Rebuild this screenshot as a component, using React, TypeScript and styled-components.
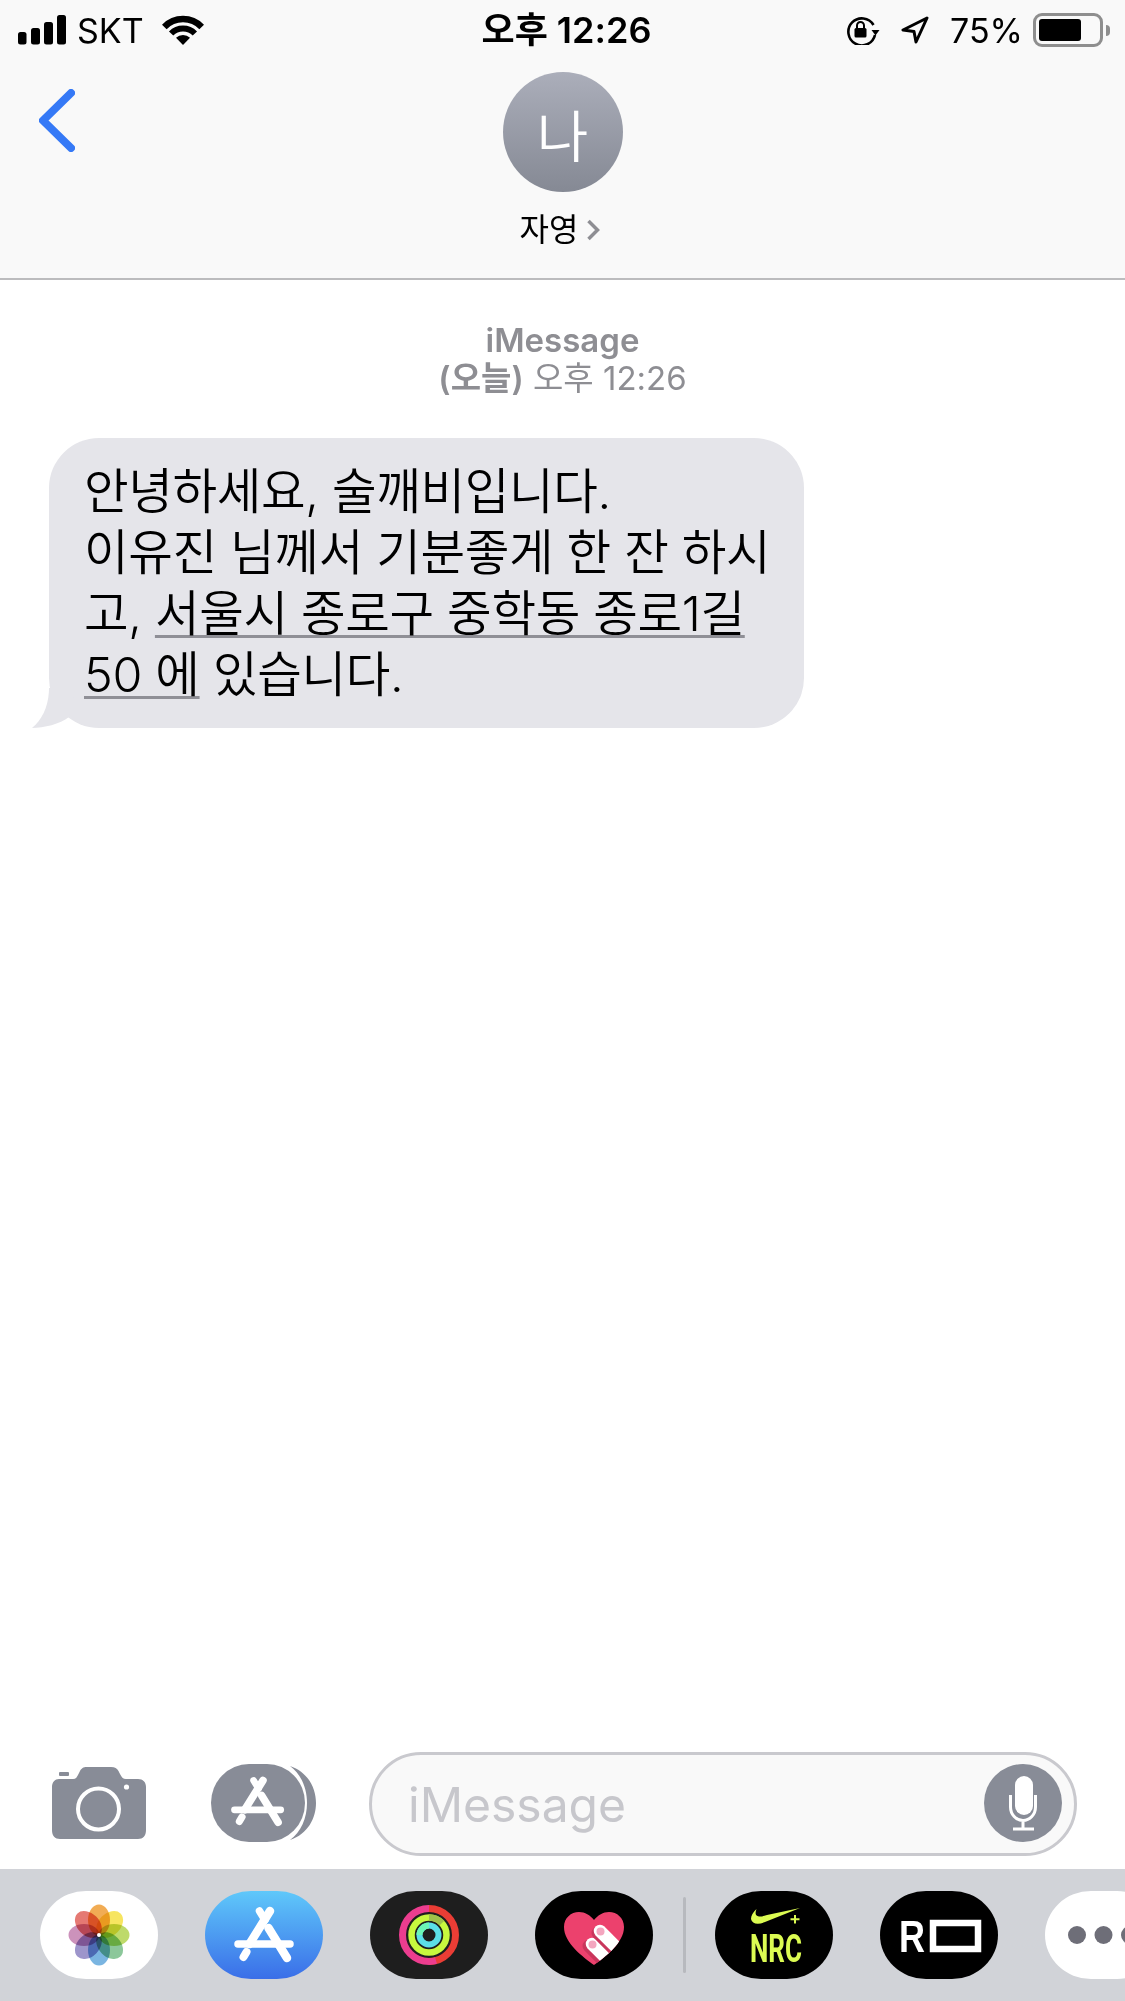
import React from "react";
import styled, { createGlobalStyle } from "styled-components";

const Global = createGlobalStyle`
  html, body { margin: 0; padding: 0; background: #fff; overflow: hidden; }
  body { font-family: Inter, "Noto Sans CJK KR", sans-serif; }
  * { box-sizing: border-box; }
`;

const Page = styled.div`
  width: 1125px;
  height: 2001px;
  display: flex;
  flex-direction: column;
  background: #fff;
  overflow: hidden;
`;

const Header = styled.header`
  height: 280px;
  flex-shrink: 0;
  background: #f9f9f9;
  border-bottom: 2px solid #bcbcbe;
  display: flex;
  flex-direction: column;
`;

const StatusBar = styled.div`
  height: 60px;
  display: grid;
  grid-template-columns: 1fr auto 1fr;
  align-items: center;
  padding: 0 15px 0 18px;
  color: #000;
`;

const StatusLeft = styled.div`
  display: flex;
  align-items: center;
`;

const Carrier = styled.span`
  font-size: 34px;
  font-weight: 400;
  margin: 2px 18px 0 11px;
  line-height: 40px;
`;

const Clock = styled.span`
  font-size: 36px;
  font-weight: 600;
  line-height: 40px;
  margin-left: 5px;
`;

const StatusRight = styled.div`
  display: flex;
  align-items: center;
  justify-content: flex-end;
`;

const LockIcon = styled.svg`
  margin-right: 20px;
`;

const Percent = styled.span`
  font-size: 34px;
  line-height: 40px;
  margin: 2px 10px 0 21px;
`;

const BatteryShell = styled.div`
  width: 70px;
  height: 34px;
  border: 3px solid #8e8e8e;
  border-radius: 9px;
  padding: 3px;
  display: flex;
`;

const BatteryFill = styled.div<{ $level: number }>`
  width: ${(p) => p.$level}%;
  background: #000;
  border-radius: 3px;
`;

const BatteryNub = styled.div`
  width: 4px;
  height: 11px;
  margin-left: 3px;
  background: #8e8e8e;
  border-radius: 0 4px 4px 0;
`;

const Nav = styled.div`
  display: grid;
  grid-template-columns: 1fr auto 1fr;
  padding-top: 12px;
`;

const BackSlot = styled.div`
  padding: 17px 0 0 39px;
`;

const Contact = styled.div`
  display: flex;
  flex-direction: column;
  align-items: center;
`;

const Avatar = styled.div`
  width: 120px;
  height: 120px;
  border-radius: 50%;
  background: linear-gradient(#abaeba, #858994);
  color: #fff;
  font-size: 56px;
  font-weight: 350;
  display: flex;
  align-items: center;
  justify-content: center;
`;

const NameRow = styled.div`
  display: flex;
  align-items: center;
  gap: 8px;
  margin: 16px 0 0 -5px;
  font-size: 32px;
  line-height: 44px;
  color: #000;
`;

const Conversation = styled.main`
  flex: 1;
  padding: 41px 0 0 49px;
`;

const Stamp = styled.div`
  margin-left: -49px;
  text-align: center;
  color: #8e8e93;
  font-size: 33px;
  line-height: 38px;
`;

const StampTitle = styled.div`
  font-weight: 600;
`;

const StampDay = styled.span`
  font-weight: 600;
`;

const Bubble = styled.div`
  position: relative;
  width: 755px;
  margin-top: 41px;
  padding: 23px 20px 23px 35px;
  background: #e5e5ea;
  border-radius: 50px;
  color: #000;
  font-size: 48.5px;
  letter-spacing: -0.35px;
  line-height: 61px;
  font-weight: 350;
  white-space: nowrap;
`;

const BubbleTail = styled.svg`
  position: absolute;
  left: -19px;
  bottom: 0;
`;

const AddressLink = styled.span`
  text-decoration: underline;
  text-decoration-color: #8f8f96;
  text-decoration-thickness: 3px;
  text-underline-offset: 4px;
  text-decoration-skip-ink: none;
`;

const InputRow = styled.div`
  height: 130px;
  flex-shrink: 0;
  display: flex;
  align-items: center;
  padding-left: 51px;
`;

const CameraIcon = styled.svg`
  margin-top: -2px;
  flex-shrink: 0;
`;

const AppsButton = styled.svg`
  margin: -2px 0 0 64px;
  flex-shrink: 0;
`;

const InputField = styled.div`
  margin-left: 52px;
  width: 708px;
  height: 104px;
  border: 3px solid #c9c9ce;
  border-radius: 52px;
  background: #f9f9f9;
  display: flex;
  align-items: center;
  justify-content: space-between;
  padding: 0 12px 0 36px;
`;

const Placeholder = styled.span`
  font-size: 48px;
  color: #c7c7cc;
  font-weight: 400;
`;

const MicIcon = styled.svg`
  margin-top: -3px;
`;

const Dock = styled.footer`
  height: 132px;
  flex-shrink: 0;
  background: #d1d3d8;
  display: flex;
  align-items: center;
  padding-left: 40px;
  overflow: hidden;
`;

const AppGroup = styled.div`
  display: flex;
  gap: 47px;
  flex-shrink: 0;
`;

const DockDivider = styled.div`
  width: 3px;
  height: 76px;
  margin: 0 29px 0 30px;
  background: #b7b9be;
  border-radius: 2px;
  flex-shrink: 0;
`;

const DockApp = styled.div<{ $bg: string }>`
  width: 118px;
  height: 88px;
  flex-shrink: 0;
  border-radius: 46px / 44px;
  background: ${(p) => p.$bg};
  display: flex;
`;

const AStore = () => (
  <g stroke="#fff" strokeWidth="7.5" strokeLinecap="round" fill="none">
    <path d="M65 20 L44.5 53" strokeWidth="8.5" />
    <path d="M54.5 20 L60 29" />
    <path d="M63.5 37 L82 67" strokeWidth="8.5" />
    <path d="M33 53 H85" />
    <path d="M38.5 66 L41.5 61" strokeWidth="8" />
  </g>
);

const AppIcon = ({ children }: { children: React.ReactNode }) => (
  <svg width="118" height="88" viewBox="0 0 118 88">
    {children}
  </svg>
);

const Signal = () => (
  <svg width="48" height="30" viewBox="0 0 48 30">
    <rect x="0" y="17" width="8.5" height="12.5" rx="2.5" />
    <rect x="13" y="13" width="9" height="16.5" rx="2.5" />
    <rect x="26" y="7" width="9" height="22.5" rx="2.5" />
    <rect x="39" y="0" width="9" height="29.5" rx="2.5" />
  </svg>
);

const arc = (r: number) => {
  const a = (46 * Math.PI) / 180;
  const dx = r * Math.sin(a);
  const dy = r * Math.cos(a);
  return `M${21 - dx} ${30 - dy} A${r} ${r} 0 0 1 ${21 + dx} ${30 - dy}`;
};

const Wifi = () => (
  <svg width="42" height="30" viewBox="0 0 42 30">
    <path d={arc(26)} fill="none" stroke="#000" strokeWidth="6.5" />
    <path d={arc(16.5)} fill="none" stroke="#000" strokeWidth="6" />
    <path d="M21 30 L14 22.8 A10 10 0 0 1 28 22.8 Z" />
  </svg>
);

const RotationLock = () => (
  <LockIcon width="36" height="30" viewBox="0 0 36 30">
    <path d="M30 20 A13.5 13.5 0 1 1 28.5 10" fill="none" stroke="#000" strokeWidth="2.6" />
    <path d="M26.5 15 H34.5 L30.5 20.5 Z" />
    <rect x="9.5" y="13" width="12" height="9.5" rx="1.5" />
    <path d="M12 13 V10.5 A3.5 3.5 0 0 1 19 10.5 V13" fill="none" stroke="#000" strokeWidth="2" />
  </LockIcon>
);

const LocationArrow = () => (
  <svg width="28" height="28" viewBox="0 0 28 28">
    <path d="M26 2 L2 14 L13 15.5 L15 26 Z" fill="none" stroke="#000" strokeWidth="3" strokeLinejoin="round" />
  </svg>
);

const Camera = () => (
  <CameraIcon width="96" height="72" viewBox="0.5 0 95 72">
    <path
      fill="#888c97"
      d="M8 12 H22 C25 12 26 10 27.5 7 L29 4 C30.5 1.5 32 0 36 0 H60 C64 0 66 1.5 67.5 4 L69 7 C70.5 10 72 12 75 12 H87 C92 12 95 15 95 20 V63 C95 69 92 72 87 72 H9 C4 72 1 69 1 63 V20 C1 15 4 12 8 12 Z"
    />
    <rect x="8" y="5" width="10" height="4" rx="1" fill="#888c97" />
    <circle cx="47.5" cy="42" r="20.5" fill="none" stroke="#fff" strokeWidth="4" />
    <circle cx="75.5" cy="20" r="2.6" fill="#fff" />
  </CameraIcon>
);

const Apps = () => (
  <AppsButton width="106" height="78" viewBox="0 0 106 78">
    <rect x="0" y="0" width="94" height="78" rx="38" ry="39" fill="#888c97" />
    <path
      fill="#888c97"
      d="M79 2 C97 8 105 24 105 39 C105 54 97 70 79 76 C90 68 96 54 96 39 C96 24 90 10 79 2 Z"
    />
    <g transform="translate(-5.9 -1.35) scale(0.89)">
      <AStore />
    </g>
  </AppsButton>
);

const Mic = () => (
  <MicIcon width="78" height="78" viewBox="0 0 78 78">
    <circle cx="39" cy="39" r="39" fill="#888c97" />
    <rect x="31" y="12" width="18" height="39" rx="9" fill="#fff" />
    <path
      d="M26.5 31 V43 A12.5 13.5 0 0 0 51.5 43 V31 M39 56.5 V65 M29 65 H50"
      fill="none"
      stroke="#fff"
      strokeWidth="3"
    />
  </MicIcon>
);

const Petal = styled.ellipse`
  mix-blend-mode: multiply;
`;

const petals = ["#f0a13c", "#f6e24a", "#b5d556", "#7cc08c", "#68abdd", "#8f86c4", "#c583b2", "#e2665f"];

const Photos = () => (
  <AppIcon>
    <g>
      {petals.map((c, i) => (
        <Petal
          key={c}
          cx="59"
          cy="29"
          rx="11"
          ry="15.5"
          fill={c}
          opacity="0.88"
          transform={`rotate(${i * 45} 59 44)`}
        />
      ))}
      <circle cx="59" cy="44" r="2" fill="#fff" />
    </g>
  </AppIcon>
);

const Store = () => (
  <AppIcon>
    <AStore />
  </AppIcon>
);

const Rings = () => (
  <AppIcon>
    <path d="M59 17.5 A26.5 26.5 0 0 1 59 70.5" fill="none" stroke="#ea3d35" strokeWidth="7" />
    <path d="M66 69.5 A26.5 26.5 0 0 1 59 70.5 A26.5 26.5 0 0 1 59 17.5" fill="none" stroke="#ec3d8f" strokeWidth="7" />
    <circle cx="59" cy="44" r="17.5" fill="none" stroke="#c8f83e" strokeWidth="6.5" />
    <path d="M59 26.5 A17.5 17.5 0 0 1 72 32" fill="none" stroke="#9fc04a" strokeWidth="6.5" />
    <circle cx="59" cy="44" r="9.5" fill="none" stroke="#5be0e8" strokeWidth="6" />
    <path d="M49.5 44 A9.5 9.5 0 0 1 59 34.5" fill="none" stroke="#6bf5b5" strokeWidth="6" />
  </AppIcon>
);

const Heart = () => {
  const heart =
    "M59 74 C48 66 29 52 29 36 C29 27 36 21 44 21 C50 21 55 24 59 29 C63 24 68 21 74 21 C82 21 89 27 89 36 C89 52 70 66 59 74 Z";
  return (
    <AppIcon>
      <defs>
        <clipPath id="heartClip">
          <path d={heart} />
        </clipPath>
      </defs>
      <path d={heart} fill="#ec416d" />
      <g clipPath="url(#heartClip)" strokeLinecap="round">
        <path d="M54 55 L80 81" stroke="#c9365c" strokeWidth="13" />
        <path d="M57 53 L85 81" stroke="#fff" strokeWidth="12.5" />
        <path d="M65 40 L96 71" stroke="#c9365c" strokeWidth="13" transform="translate(-2 2)" />
        <path d="M65 40 L96 71" stroke="#fff" strokeWidth="12.5" />
      </g>
      <circle cx="65.5" cy="40.5" r="4" fill="#f4a6bf" />
      <circle cx="57.5" cy="53.5" r="4" fill="#f4a6bf" />
    </AppIcon>
  );
};

const NrcLabel = styled.text`
  font-family: Roboto, "Liberation Sans", sans-serif;
  font-weight: 700;
  font-size: 38px;
  fill: #dcfb52;
`;

const Nrc = () => (
  <AppIcon>
    <path
      fill="#dcfb52"
      d="M85 17 L50 31 C43 34 37 33 36 28 C36 25 38 21 41.5 18 C40 22 40 25 44 25.5 C46 25.8 49 25 52 24 Z"
    />
    <path d="M80 24 V32.5 M75.5 28.2 H84.5" stroke="#dcfb52" strokeWidth="2" />
    <NrcLabel x="35" y="71" textLength="52" lengthAdjust="spacingAndGlyphs">
      NRC
    </NrcLabel>
  </AppIcon>
);

const RLabel = styled.text`
  font-family: "Liberation Sans", Roboto, sans-serif;
  font-weight: 700;
  font-size: 45px;
  fill: #fff;
`;

const RoomLogo = () => (
  <AppIcon>
    <RLabel x="19" y="61" textLength="26" lengthAdjust="spacingAndGlyphs">
      R
    </RLabel>
    <rect x="53" y="32" width="45" height="26" fill="none" stroke="#fff" strokeWidth="6.5" />
  </AppIcon>
);

const More = () => (
  <AppIcon>
    <circle cx="32" cy="44" r="9" fill="#6e6e78" />
    <circle cx="58.5" cy="44" r="9" fill="#6e6e78" />
    <circle cx="85" cy="44" r="9" fill="#6e6e78" />
  </AppIcon>
);

export default function App() {
  return (
    <Page>
      <Global />
      <Header>
        <StatusBar>
          <StatusLeft>
            <Signal />
            <Carrier>SKT</Carrier>
            <Wifi />
          </StatusLeft>
          <Clock>오후 12:26</Clock>
          <StatusRight>
            <RotationLock />
            <LocationArrow />
            <Percent>75%</Percent>
            <BatteryShell>
              <BatteryFill $level={73} />
            </BatteryShell>
            <BatteryNub />
          </StatusRight>
        </StatusBar>
        <Nav>
          <BackSlot>
            <svg width="36" height="63" viewBox="0 0 36 63">
              <path d="M32 4 L4 31.5 L32 59" fill="none" stroke="#3579f6" strokeWidth="8" strokeLinecap="round" strokeLinejoin="round" />
            </svg>
          </BackSlot>
          <Contact>
            <Avatar>나</Avatar>
            <NameRow>
              자영
              <svg width="14" height="22" viewBox="0 0 14 22">
                <path d="M2.5 2 L11.5 11 L2.5 20" fill="none" stroke="#8e8e93" strokeWidth="3.5" />
              </svg>
            </NameRow>
          </Contact>
        </Nav>
      </Header>
      <Conversation>
        <Stamp>
          <StampTitle>iMessage</StampTitle>
          <div>
            <StampDay>(오늘)</StampDay> 오후 12:26
          </div>
        </Stamp>
        <Bubble>
          <BubbleTail width="45" height="40" viewBox="0 0 45 40">
            <path d="M19 0 C19 18 12 32 2 40 C14 40 30 36 39 29 L45 0 Z" fill="#e5e5ea" />
          </BubbleTail>
          안녕하세요, 술깨비입니다.
          <br />
          이유진 님께서 기분좋게 한 잔 하시
          <br />
          고, <AddressLink>서울시 종로구 중학동 종로1길</AddressLink>
          <br />
          <AddressLink>50 에</AddressLink> 있습니다.
        </Bubble>
      </Conversation>
      <InputRow>
        <Camera />
        <Apps />
        <InputField>
          <Placeholder>iMessage</Placeholder>
          <Mic />
        </InputField>
      </InputRow>
      <Dock>
        <AppGroup>
          <DockApp $bg="#ffffff">
            <Photos />
          </DockApp>
          <DockApp $bg="linear-gradient(#5fc8fa, #3a6ee8)">
            <Store />
          </DockApp>
          <DockApp $bg="#1e1e1e">
            <Rings />
          </DockApp>
          <DockApp $bg="#000000">
            <Heart />
          </DockApp>
        </AppGroup>
        <DockDivider />
        <AppGroup>
          <DockApp $bg="#000000">
            <Nrc />
          </DockApp>
          <DockApp $bg="#000000">
            <RoomLogo />
          </DockApp>
          <DockApp $bg="#ffffff">
            <More />
          </DockApp>
        </AppGroup>
      </Dock>
    </Page>
  );
}
